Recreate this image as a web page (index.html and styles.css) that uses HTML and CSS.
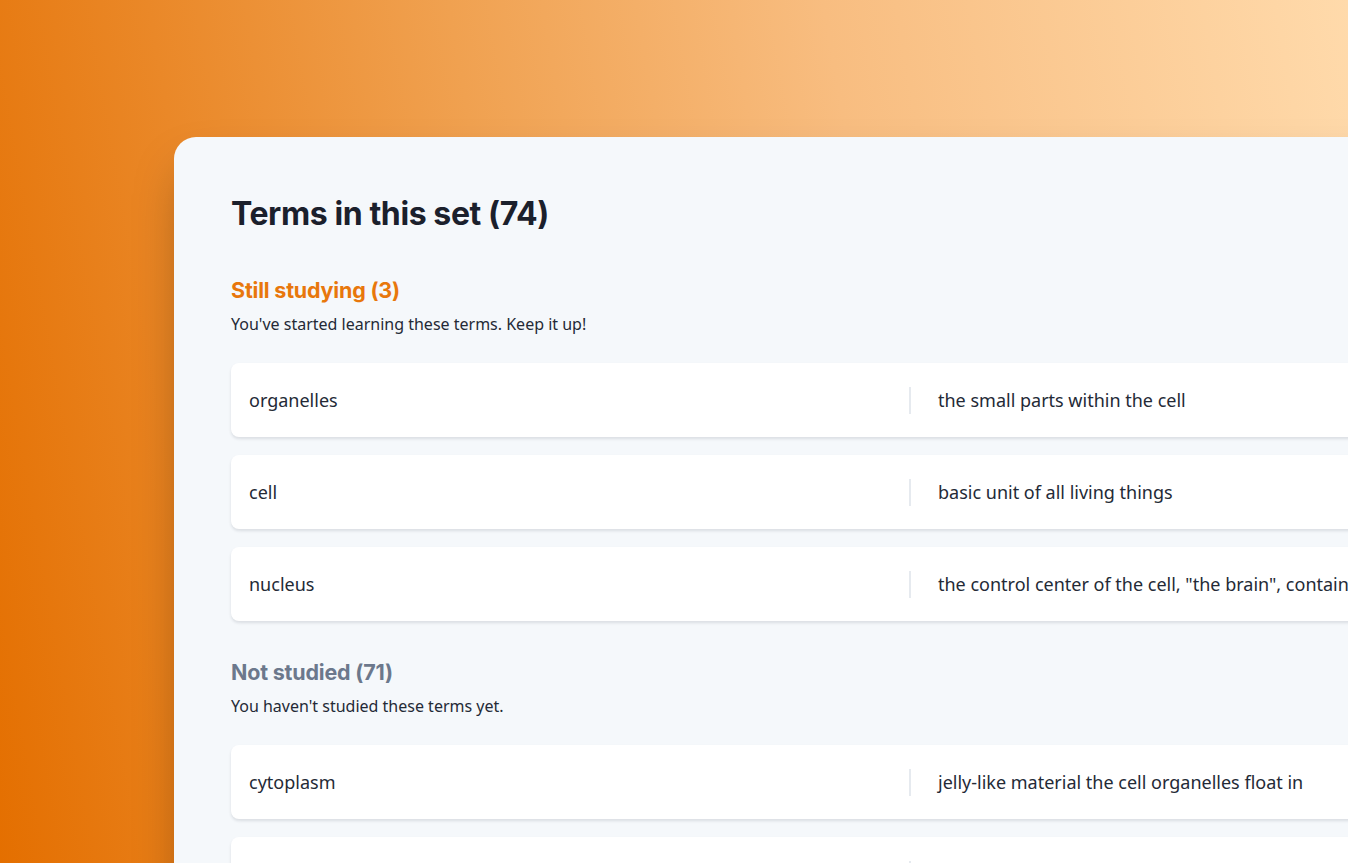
FILE: index.html
```html
<!DOCTYPE html>
<html lang="en">
<head>
<meta charset="utf-8">
<title>Terms in this set</title>
<link rel="stylesheet" href="styles.css">
</head>
<body>
<div class="stage">
  <main class="card">
    <h1 class="title">Terms in this set (74)</h1>

    <section class="group">
      <h2 class="group-title studying">Still studying (3)</h2>
      <p class="group-desc">You've started learning these terms. Keep it up!</p>
      <ul class="terms">
        <li class="term-row"><span class="term">organelles</span><span class="def">the small parts within the cell</span></li>
        <li class="term-row"><span class="term">cell</span><span class="def">basic unit of all living things</span></li>
        <li class="term-row"><span class="term">nucleus</span><span class="def">the control center of the cell, "the brain", contains the DNA</span></li>
      </ul>
    </section>

    <section class="group">
      <h2 class="group-title unstudied">Not studied (71)</h2>
      <p class="group-desc">You haven't studied these terms yet.</p>
      <ul class="terms">
        <li class="term-row"><span class="term">cytoplasm</span><span class="def">jelly-like material the cell organelles float in</span></li>
        <li class="term-row"><span class="term">cell membrane</span><span class="def">controls what enters and leaves the cell</span></li>
      </ul>
    </section>
  </main>
</div>
</body>
</html>
```
FILE: styles.css
```css
* { box-sizing: border-box; }
html, body {
  margin: 0;
  padding: 0;
  height: 100%;
  overflow: hidden;
}
body {
  font-family: "Noto Sans", "Open Sans", sans-serif;
  color: #222836;
  background: linear-gradient(80deg, #e46f00 0%, #f0a150 40%, #f8bd80 65%, #ffdaab 100%);
}
.stage {
  padding: 137px 0 0 174px;
  width: 1600px;
}
.card {
  width: 1300px;
  min-height: 900px;
  background: #f5f8fb;
  border-radius: 22px;
  padding: 57px 57px 0 57px;
  box-shadow: 0 25px 50px -12px rgba(0, 0, 0, 0.35);
}
.title {
  margin: 0;
  font-family: "Inter", "Lato", sans-serif;
  font-weight: 700;
  font-size: 32px;
  line-height: 40px;
  letter-spacing: -0.4px;
  color: #1b202c;
}
.group { margin-top: 42px; }
.group + .group { margin-top: 37px; }
.group-title {
  margin: 0;
  font-family: "Inter", "Lato", sans-serif;
  font-weight: 700;
  font-size: 21.5px;
  line-height: 28px;
  letter-spacing: -0.2px;
}
.studying { color: #e8770c; }
.unstudied { color: #6c788c; }
.group-desc {
  margin: 9px 0 0;
  font-size: 16px;
  line-height: 22px;
  color: #242a36;
}
.terms {
  list-style: none;
  margin: 28px 0 0;
  padding: 0;
  display: flex;
  flex-direction: column;
  gap: 18px;
}
.term-row {
  display: flex;
  align-items: center;
  height: 74px;
  background: #ffffff;
  border-radius: 8px;
  padding: 0 18px;
  box-shadow: 0 2px 3px rgba(30, 40, 60, 0.12);
  font-size: 18px;
  color: #242a36;
}
.term {
  flex: 0 0 660px;
  padding-right: 20px;
}
.def {
  border-left: 2px solid #e6eaef;
  padding-left: 27px;
  line-height: 27px;
  white-space: nowrap;
}
```
